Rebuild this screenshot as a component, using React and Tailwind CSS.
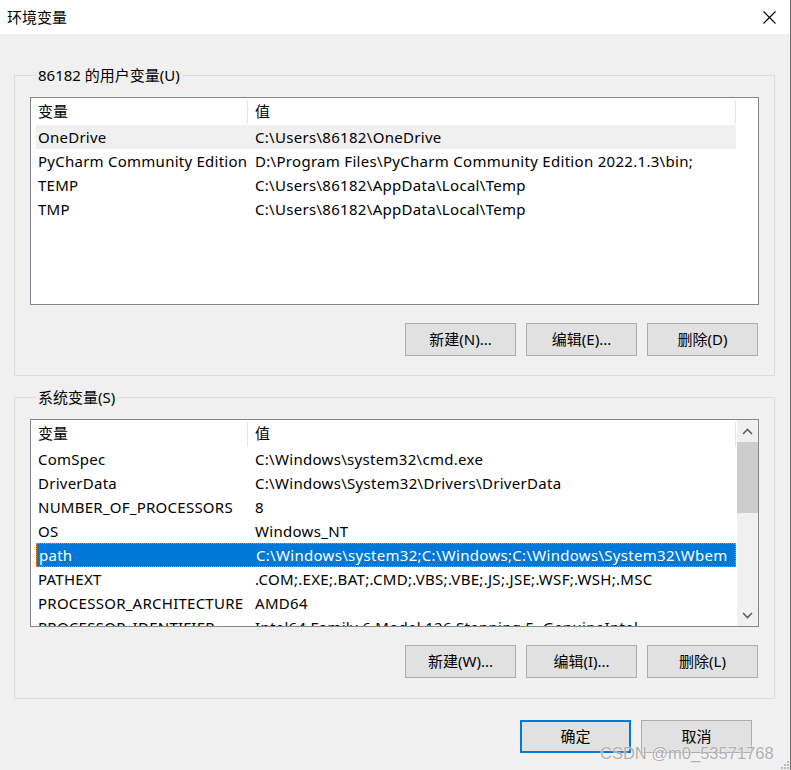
import React from 'react';

const USER_VARS = [
  ['OneDrive', 'C:\\Users\\86182\\OneDrive'],
  ['PyCharm Community Edition', 'D:\\Program Files\\PyCharm Community Edition 2022.1.3\\bin;'],
  ['TEMP', 'C:\\Users\\86182\\AppData\\Local\\Temp'],
  ['TMP', 'C:\\Users\\86182\\AppData\\Local\\Temp'],
];

const SYS_VARS = [
  ['ComSpec', 'C:\\Windows\\system32\\cmd.exe'],
  ['DriverData', 'C:\\Windows\\System32\\Drivers\\DriverData'],
  ['NUMBER_OF_PROCESSORS', '8'],
  ['OS', 'Windows_NT'],
  ['path', 'C:\\Windows\\system32;C:\\Windows;C:\\Windows\\System32\\Wbem'],
  ['PATHEXT', '.COM;.EXE;.BAT;.CMD;.VBS;.VBE;.JS;.JSE;.WSF;.WSH;.MSC'],
  ['PROCESSOR_ARCHITECTURE', 'AMD64'],
  ['PROCESSOR_IDENTIFIER', 'Intel64 Family 6 Model 126 Stepping 5, GenuineIntel'],
];

const font = { fontFamily: '"Noto Sans", "Noto Sans CJK SC", sans-serif' };

function Btn({ children, primary }) {
  return (
    <button
      className={
        primary
          ? 'w-[111px] h-[33px] bg-[#e1e1e1] border-2 border-[#0078d7] text-[15px] text-black leading-none'
          : 'w-[111px] h-[33px] bg-[#e1e1e1] border border-[#adadad] text-[15px] text-black leading-none'
      }
    >
      {children}
    </button>
  );
}

function Row({ name, value, state }) {
  let cls = 'flex h-[24px] shrink-0 items-center ml-[5px] w-[700px] text-black';
  if (state === 'inactive') cls = 'flex h-[24px] shrink-0 items-center ml-[5px] w-[700px] bg-[#f0f0f0] text-black';
  if (state === 'selected')
    cls = 'flex h-[24px] shrink-0 items-center ml-[5px] w-[700px] bg-[#0078d7] text-white border border-dotted border-[#ff8728]';
  return (
    <div className={cls}>
      <div className="w-[212px] pl-[2px] shrink-0 whitespace-nowrap overflow-hidden tracking-[0.25px]">{name}</div>
      <div className="pl-[7px] whitespace-nowrap overflow-hidden tracking-[0.3px]">{value}</div>
    </div>
  );
}

function ListView({ rows, selected, inactive, scroll }) {
  return (
    <div className="flex h-[208px] border border-[#828790] bg-white overflow-hidden text-[15px]">
      <div className="flex-1 flex flex-col min-w-0 overflow-hidden">
        <div className="flex h-[27px] items-center ml-[5px] w-[700px] shrink-0">
          <div className="w-[212px] pl-[2px] shrink-0 border-r border-[#e5e5e5] h-[24px] flex items-center">变量</div>
          <div className="flex-1 pl-[7px] border-r border-[#e5e5e5] h-[24px] flex items-center">值</div>
        </div>
        {rows.map(([n, v], i) => (
          <Row
            key={n}
            name={n}
            value={v}
            state={i === selected ? 'selected' : i === inactive ? 'inactive' : ''}
          />
        ))}
      </div>
      {scroll && (
        <div className="w-[21px] shrink-0 bg-[#f0f0f0] flex flex-col">
          <div className="h-[22px] flex items-center justify-center">
            <svg width="11" height="7" viewBox="0 0 11 7">
              <path d="M1 6 L5.5 1.5 L10 6" fill="none" stroke="#606060" strokeWidth="1.6" />
            </svg>
          </div>
          <div className="h-[71px] bg-[#cdcdcd]" />
          <div className="flex-1" />
          <div className="h-[22px] flex items-center justify-center">
            <svg width="11" height="7" viewBox="0 0 11 7">
              <path d="M1 1 L5.5 5.5 L10 1" fill="none" stroke="#606060" strokeWidth="1.6" />
            </svg>
          </div>
        </div>
      )}
    </div>
  );
}

function Group({ label, children, className }) {
  return (
    <fieldset className={'border border-[#dcdcdc] px-[15px] ' + className}>
      <legend className="ml-[6px] px-[2px] h-[20px] leading-[20px] text-[15px] text-black">{label}</legend>
      {children}
    </fieldset>
  );
}

export default function App() {
  return (
    <div className="relative w-[791px] h-[770px] bg-[#f0f0f0] border-r border-[#6e6e6e] overflow-hidden" style={font}>
      <div className="h-[34px] bg-white flex items-center justify-between pl-[7px] pr-[14px]">
        <span className="text-[15px] text-black">环境变量</span>
        <svg width="13" height="13" viewBox="0 0 13 13">
          <path d="M0.5 0.5 L12.5 12.5 M12.5 0.5 L0.5 12.5" stroke="#000" strokeWidth="1.1" />
        </svg>
      </div>

      <div className="pl-[14px] pr-[15px]">
        <Group label="86182 的用户变量(U)" className="mt-[31px] pb-[19px]">
          <div className="mt-[12px]">
            <ListView rows={USER_VARS} inactive={0} />
          </div>
          <div className="flex justify-end gap-[10px] mt-[18px] mr-[1px]">
            <Btn>新建(N)...</Btn>
            <Btn>编辑(E)...</Btn>
            <Btn>删除(D)</Btn>
          </div>
        </Group>

        <Group label="系统变量(S)" className="mt-[11px] pb-[20px]">
          <div className="mt-[12px]">
            <ListView rows={SYS_VARS} selected={4} scroll />
          </div>
          <div className="flex justify-end gap-[10px] mt-[18px] mr-[1px]">
            <Btn>新建(W)...</Btn>
            <Btn>编辑(I)...</Btn>
            <Btn>删除(L)</Btn>
          </div>
        </Group>

        <div className="flex justify-end gap-[10px] mt-[21px] pr-[23px]">
          <Btn primary>确定</Btn>
          <Btn>取消</Btn>
        </div>
      </div>

      {/* watermark */}
      <div
        className="absolute left-[600px] top-[741px] text-[16.5px] text-[#a8a8a8] opacity-90 whitespace-nowrap"
        style={{ fontFamily: '"Liberation Sans", Arial, sans-serif', textShadow: '0 0 2px #fff, 0 0 1px #fff' }}
      >
        CSDN @m0_53571768
      </div>

      {/* resize grip */}
      <svg className="absolute right-[1px] bottom-[1px]" width="10" height="10" viewBox="0 0 10 10">
        {[[8, 2], [5, 5], [8, 5], [2, 8], [5, 8], [8, 8]].map(([x, y]) => (
          <rect key={x + '-' + y} x={x} y={y} width="2" height="2" fill="#b8b8b8" />
        ))}
      </svg>
    </div>
  );
}
